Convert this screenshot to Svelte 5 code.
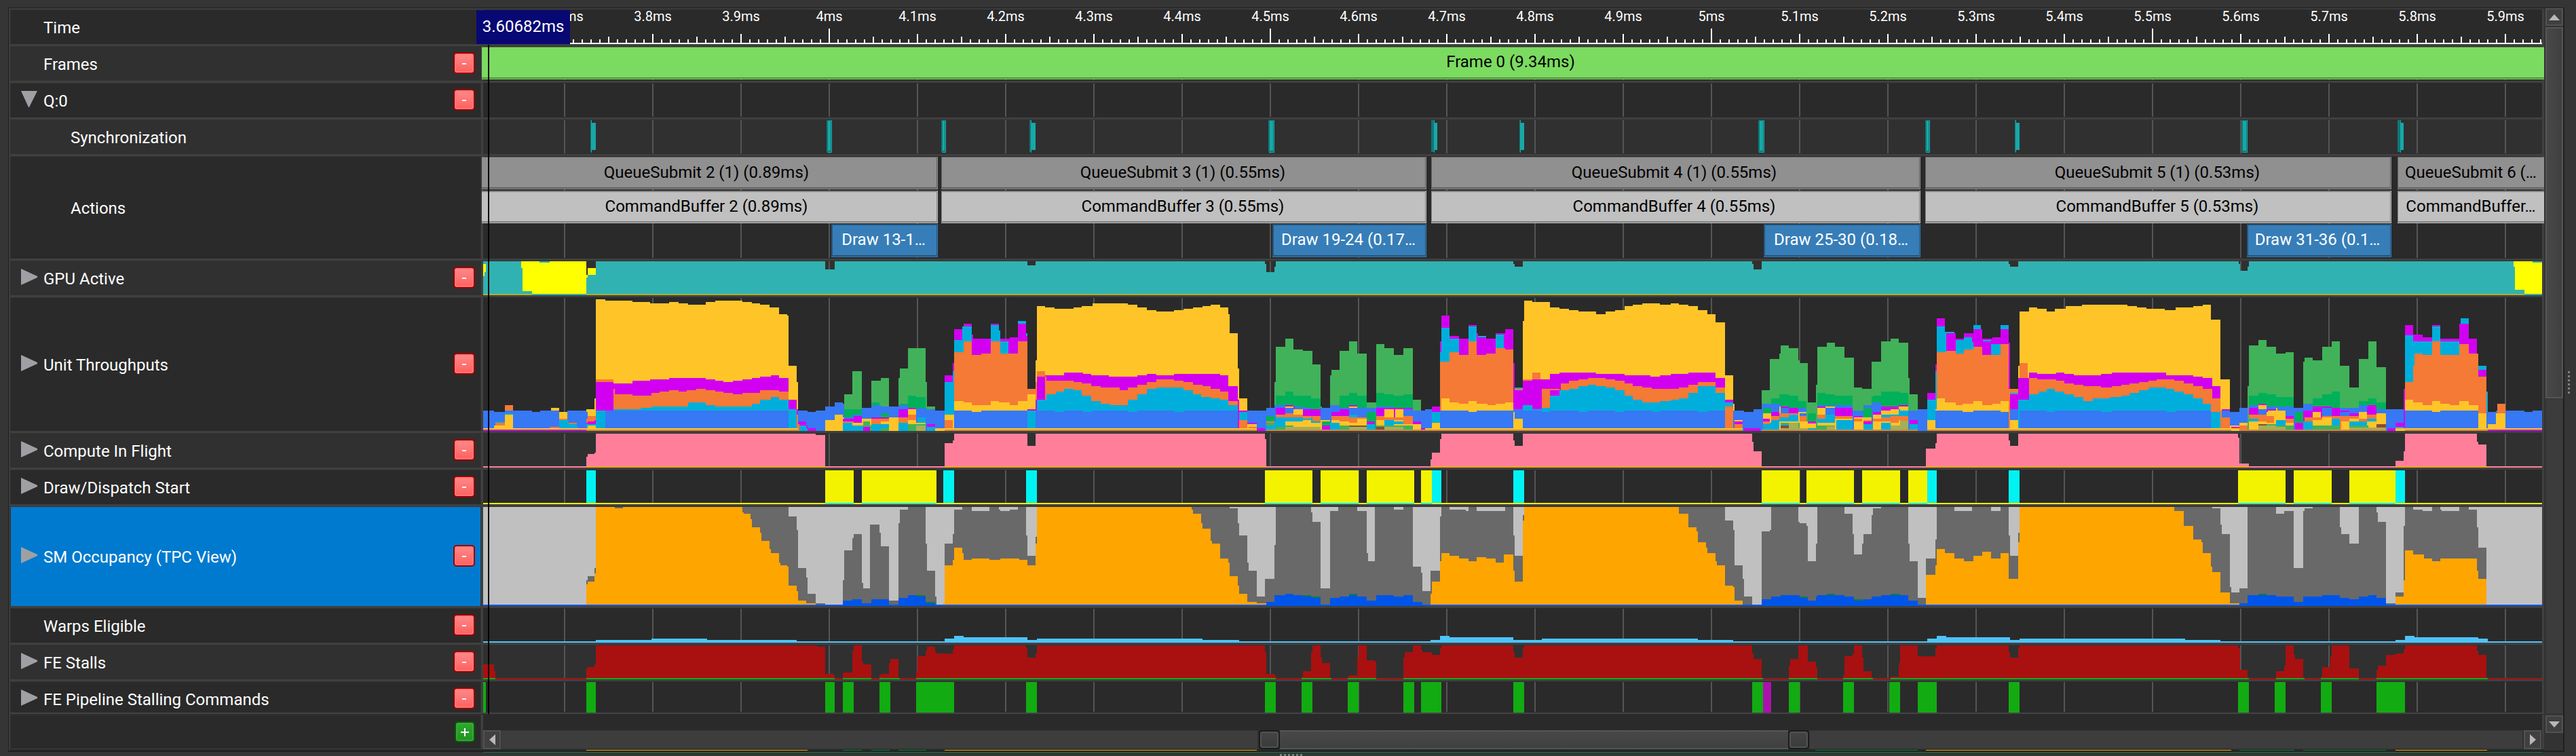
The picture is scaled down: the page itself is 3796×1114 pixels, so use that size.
<script>
  const X0 = 712;
  const WIDTH = 3034;

  // Counter samples are stored per window; each window has its own origin and scale.
  const windows = {
    A: { x: 700, s: 760 / 1568 },
    B: { x: 1400, s: 760 / 1568 },
    C: { x: 2100, s: 760 / 1568 },
    D: { x: 2800, s: 996 / 1568 }
  };
  const mapY = (v) => Math.round(360 + v * (754 / 1568));

  const colours = {
    Y: '#ffc528', O: '#f57a35', M: '#d200f0', C: '#00aedb', B: '#3778f4',
    G: '#41b25a', E: '#00b159', K: '#a3b055', R: '#8c4a3a', P: '#d8863a',
    teal: '#31b2b2', bright: '#ffff00', olive: '#adb22c',
    pink: '#ff7f9b', amber: '#ffa500', goldline: '#eca618',
    cyan: '#00f3f3', yellow: '#f3f300',
    dark: '#696969', light: '#c0c0c0', blue: '#0055e9', forest: '#088040',
    sky: '#4fc3fa', red: '#a81110', green: '#12ab12', purple: '#ab12ab'
  };

  // "window colour x y x y ... xEnd" becomes a stepped area down to the base line.
  function areas(text, base) {
    const yb = mapY(base);
    return text.trim().split('\n').map((line) => {
      const t = line.trim().split(/\s+/);
      const w = windows[t[0]];
      const n = t.slice(2).map(Number);
      const mx = (v) => Math.round(w.x + v * w.s);
      let d = `M${mx(n[0])} ${yb}`;
      for (let i = 0; i + 1 < n.length; i += 2) {
        d += `V${mapY(n[i + 1])}H${mx(n[i + 2] ?? n[i])}`;
      }
      return { d: d + `V${yb}Z`, fill: colours[t[1]] };
    });
  }

  // "window colour start-end start-end ..." becomes bars of one height.
  function bars(text, top, base) {
    return text.trim().split('\n').map((line) => {
      const t = line.trim().split(/\s+/);
      const w = windows[t[0]];
      const d = t.slice(2).map((r) => {
        const [a, b] = r.split('-').map((v) => Math.round(w.x + Number(v) * w.s));
        return `M${a} ${mapY(top)}H${b}V${mapY(base)}H${a}Z`;
      }).join('');
      return { d, fill: colours[t[1]] };
    });
  }

  const gpu = [
    ...areas(`
      A teal 25 52 338 156 342 73 367 52 1065 77 1093 52 1500
      B teal 0 52 235 64 260 52 957 60 961 85 986 69 990 52 1500
      C teal 0 52 268 60 272 69 297 52 994 60 998 77 1023 52 1500
      D teal 0 52 252 60 255 69 274 52 786 60 789 81 806 69 809 52 1489
      A bright 25 60 33
      A teal 25 98 29 85 33
      A bright 140 52 197 56 227 52 338 94 342 73 367
      A teal 140 73 144 143 173 152 338 102 342 94 367
      D bright 1423 52 1467 56 1489
      D teal 1423 69 1426 139 1448 152 1489`, 156),
    ...bars(`
      A olive 25-173 338-1500
      B olive 0-1568
      C olive 0-1568
      D olive 0-1448`, 152, 156)
  ];

  const unit = areas(`
    A O 91 493 116
    A Y 231 501 256
    A B 25 509 58 514 91 509 173 514 198 509 256 514 281 509 338
    A C 62 543 91 518 116
    A O 62 547 91
    A Y 58 555 91 522 116
    A Y 256 514 281
    A O 227 559 256 534 281 547 310 559 314
    A C 256 539 285 551 310 559 314
    A Y 338 505 363 472 367
    A B 338 514 342
    A O 338 534 342 526 367
    A M 338 547 342 543 363 539 367
    A C 338 551 367
    A Y 342 555 367
    A Y 367 168 396 173 479 177 532 181 590 177 619 181 648 185 701 177 730 173 813 177 842 181 867 185 896 193 924 214 950 218 953 372 978 422 982
    A O 367 414 421
    A M 367 422 421 426 479 418 532 414 590 410 701 414 730 418 755 422 784 418 813 414 842 410 867 406 900 401 924 410 953 476 978 505 982
    A O 421 443 425 460 479 464 536 455 561 451 590 447 619 451 644 447 673 443 701 447 730 451 755 455 784 460 813 455 867 447 924 451 953 505 978 522 982
    A C 367 509 396 509 421 505 503 501 536 497 648 485 701 493 730 497 842 489 867 476 900 468 924 476 953 505 978
    A B 396 509 953
    A B 982 509 1011 514 1036 509 1065 497 1093 485 1118 489 1122 501 1147 497 1176 501 1205 493 1234 497 1287 493 1316 501 1374 505 1399 509 1428
    A M 982 543 1007 555 1011 564 1036
    A C 982 555 1007 564 1011
    A O 982 551 986
    A Y 1065 539 1093 522 1118 530 1122
    A G 1122 460 1147 389 1176
    A G 1205 418 1234 410 1259
    A G 1287 410 1292 381 1316 318 1370 422 1374 497 1399
    A E 1122 505 1176
    A E 1205 485 1230 493 1234
    A E 1287 493 1292 489 1316 464 1341 468 1370 501 1374
    A B 1122 530 1147 522 1176
    A B 1205 493 1234 497 1287 493 1316 505 1345 501 1370 505 1399
    A E 1234 518 1259
    A M 1118 534 1151 526 1176
    A M 1205 530 1259
    A M 1287 505 1316 501 1341
    A O 1118 543 1151
    A G 1180 543 1201
    A Y 1176 534 1205
    A G 1180 543 1201 556 1205
    A M 1176 559 1201
    A O 1205 534 1259
    A Y 1234 543 1259 530 1287
    A C 1118 547 1151
    A Y 1147 547 1176
    A C 1118 555 1180
    A C 1205 551 1259
    A G 1234 564 1259
    A O 1287 530 1316
    A C 1287 547 1316
    A Y 1316 505 1341
    A O 1316 522 1341
    A C 1345 530 1370
    A Y 1316 539 1341 547 1370
    A G 1316 551 1370
    A K 1341 555 1370
    A M 1374 551 1399
    A C 1374 559 1399
    A M 1428 401 1453 364 1457
    A C 1428 422 1453 389 1457
    A Y 1428 522 1453 514 1457
    A O 1428 539 1453
    B M 0 401 8 364 12 260 41 243 66 276 70 289 124 243 149 268 153 289 182 285 206 243 231 280 235
    B C 0 422 8 389 12 293 37 252 66 340
    B C 124 247 149 264 153 297 177
    B C 206 235 231 272 235
    B M 206 243 231 280 235
    B O 12 331 41 297 66 339 95 335 124 297 153 335 206 297 235 443 260
    B Y 0 522 12 480 41 485 66 493 124 480 149 485 153 485 182 493 206 480 235 460 260
    B O 0 539 8
    B B 12 509 66 514 95 509 235
    B M 235 505 260
    B C 235 509 260
    B Y 260 356 264 189 289 193 318 198 375 193 400 189 433 181 541 185 570 193 598 202 627 206 681 202 710 198 739 193 767 189 792 185 821 193 846 214 850 272 875 381 879 472 904
    B O 260 422 264 389 289
    B M 260 476 264 406 289 401 347 393 404 397 429 401 483 406 570 401 598 397 627 401 681 397 821 401 846 435 875 476 879
    B O 289 406 293 418 375 422 400 426 429 435 458 439 516 447 541 439 570 431 598 422 627 414 681 418 710 422 739 431 767 435 792 443 821 451 846 480 875
    B C 264 476 293 460 322 451 347 443 375 447 400 464 429 480 458 489 487 493 541 476 570 460 598 443 627 439 710 447 739 460 763 468 792 472 821 476 846 493 875
    B B 260 509 318 514 347 509 404 514 433 509 541 514 570 509 681 514 710 509 875
    B M 879 509 904
    B C 879 514 904
    B O 879 539 904
    B B 904 509 961 501 986 493 990
    B M 904 547 933
    B Y 904 551 933
    B O 908 559 933
    B M 933 564 957
    B E 961 526 986
    B O 961 543 986
    B G 961 547 986
    B C 961 556 986
    B G 986 422 990 314 1019 289 1044 322 1073 326 1102 368 1126 497 1130
    B G 1155 402 1159 385 1184 326 1213 297 1238 335 1267 485 1296 306 1321 318 1350 339 1379 318 1407 476 1432 505
    B E 990 464 1019 451 1044 464 1098 472 1126
    B E 1184 464 1213 455 1238 464 1267
    B E 1296 455 1321 460 1350 464 1379 460 1407
    B B 986 493 1019 497 1073 501 1098 505 1126 501 1155 493 1184 501 1213 497 1238 501 1267 501 1296 497 1350 505 1407 509 1461
    B M 990 501 1019 493 1044 497 1048 505 1126
    B Y 1019 497 1044 505 1073
    B B 1019 502 1044
    B M 1073 505 1098 514 1126
    B M 1159 514 1184 505 1213 493 1238 518 1242
    B Y 1213 497 1238
    B B 1213 502 1238 505 1267
    B M 1296 501 1407
    B Y 1321 505 1350 505 1379 530 1407
    B B 1379 505 1407
    B M 1350 505 1353
    B O 990 522 1019 518 1044 522 1073 526 1098 526 1126
    B O 1159 526 1213 522 1238 530 1267
    B O 1296 526 1321 530 1379 526 1407
    B C 986 543 990 530 1073 534 1098 530 1102 543 1126
    B Y 1019 543 1073 539 1098 547 1126 539 1155
    B C 1019 530 1044
    B Y 1019 543 1073 539 1098
    B E 1130 543 1155
    B M 1130 556 1155
    B B 1180 551 1184
    B Y 1159 539 1184 543 1213 534 1267
    B C 1155 547 1184
    B C 1213 522 1238 551 1242
    B O 1213 530 1238
    B O 1184 526 1213
    B Y 1184 543 1213 547 1238 547 1267
    B E 1267 514 1296
    B M 1267 543 1292
    B C 1267 551 1292
    B Y 1296 539 1321 543 1350 539 1407
    B C 1321 539 1350 543 1407
    B O 1379 534 1407
    B Y 1296 547 1321 555 1350 551 1407
    B G 990 559 1019 555 1044 559 1126
    B G 1184 556 1267
    B G 1296 556 1407
    B K 1019 559 1126
    B R 1213 555 1267
    B R 1296 559 1321
    B K 1213 559 1267
    B K 1321 559 1379
    B M 1407 543 1432
    B Y 1407 551 1432
    B M 1432 564 1461
    B M 1465 497 1490
    B C 1465 514 1490
    B Y 1465 547 1490
    B M 1490 297 1494 218 1518 281 1547 289 1568
    B C 1490 330 1494 256 1518 289 1547
    B O 1490 360 1518 331 1547 339 1568
    B Y 1490 472 1518 485 1547 489 1568
    B B 1490 509 1568
    C B 0 505 21
    C M 21 497 45 297 50 218 74 281 103 289 132 247 157 272 161 285 186 289 215 272 243 260 268 364 272
    C C 21 514 45 330 50 256 74 289 103
    C C 132 252 157
    C C 161 281 186
    C M 161 285 186
    C C 215 276 240
    C Y 21 547 45
    C O 45 360 74 331 103 339 132 297 157 339 186 335 215 318 243 322 268
    C Y 50 472 74 485 103 489 132 480 157 489 190 493 215 489 243 485 268
    C B 45 509 132 514 157 509 268
    C C 272 439 297
    C O 272 443 297
    C M 268 480 272 447 297
    C B 268 505 297
    C Y 268 514 272 534 297
    C Y 297 235 301 173 326 177 380 193 409 198 438 202 466 206 520 214 549 206 578 202 607 189 631 185 660 181 714 185 747 181 772 185 801 189 829 202 858 214 883 239 912 401 937 489 941
    C O 297 414 326 393 351
    C M 297 418 326 414 380 397 409 393 520 397 607 401 685 406 714 401 747 397 801 393 883 410 912 476 937
    C O 355 443 409 426 438 418 466 414 495 410 549 414 578 418 607 426 631 435 660 439 689 443 772 439 801 431 829 422 883 439 912 497 937
    C M 380 447 383 447 409 426 412
    C C 297 493 326 501 355 501 380 464 409 447 438 443 466 435 495 431 520 435 549 439 578 447 607 464 631 476 660 485 714 480 747 476 772 472 801 455 829 435 883 455 912 485 937
    C M 326 418 355
    C C 326 505 355
    C B 297 509 355 514 380 509 466 514 495 509 578 514 607 509 690 514 714 509 829 514 858 509 912
    C O 912 497 937
    C B 912 509 970 514 999 505 1023 489 1081 497 1164
    C O 912 509 937
    C Y 941 539 966
    C M 941 543 966
    C O 941 551 966
    C M 970 564 1020
    C G 1023 447 1048 351 1077 335 1081 310 1106 318 1135 356 1139 364 1164 485 1188 430 1193 314 1222 302 1246 314 1275 347 1304 439 1329 443 1358 360 1386 297 1415 289 1440 302 1469 410 1473 460 1498
    C E 1052 472 1077 460 1106 464 1135 480 1160
    C E 1193 455 1217 460 1246 464 1300
    C E 1358 468 1361 464 1386 451 1469 489 1473
    C B 1023 489 1081 501 1106 501 1160
    C B 1193 493 1300 509 1333 493 1358 485 1386 497 1469 505 1527
    C E 1027 501 1052
    C M 1052 514 1077 497 1106 505 1135 514 1160
    C Y 1027 518 1052 526 1077 497 1081
    C B 1081 501 1106
    C M 1106 501 1135
    C O 1052 526 1077 518 1106 518 1135
    C M 1027 534 1048
    C C 1077 530 1106 522 1135
    C Y 1135 514 1160
    C B 1139 518 1160
    C O 1139 526 1160
    C C 1052 539 1077
    C O 1027 543 1048
    C C 1027 551 1048 547 1081
    C O 1081 518 1106
    C C 1081 530 1106 522 1135
    C Y 1077 543 1164
    C G 1081 547 1139
    C K 1106 547 1135
    C C 1081 551 1106
    C R 1081 556 1106
    C K 1081 564 1164
    C E 1164 518 1188
    C M 1164 543 1188
    C Y 1164 550 1188
    C C 1164 564 1188
    C M 1193 497 1246 501 1300
    C Y 1193 501 1217 497 1246
    C B 1217 501 1246
    C O 1193 522 1217 526 1300
    C C 1217 522 1246
    C C 1193 534 1217
    C Y 1217 547 1246 534 1300
    C C 1250 539 1300
    C Y 1193 547 1217
    C G 1193 555 1246
    C K 1222 558 1246
    C M 1304 526 1329
    C E 1333 501 1358
    C Y 1304 530 1329
    C O 1304 534 1329
    C Y 1304 543 1329 530 1358
    C O 1333 539 1358
    C M 1333 543 1358
    C C 1333 551 1386
    C M 1361 514 1386 497 1440 493 1469
    C Y 1361 522 1386 509 1415 505 1440 497 1469
    C O 1361 534 1386 522 1440
    C C 1386 522 1440 505 1469
    C O 1386 530 1415 526 1469
    C Y 1361 543 1415 547 1440 539 1469
    C C 1386 547 1415
    C K 1415 555 1469
    C M 1473 539 1498
    C C 1473 551 1498
    C M 1527 455 1551 368 1555
    C C 1527 476 1551 389 1568
    C Y 1527 539 1551 505 1555
    D G 0 302 19 460 41
    D E 0 455 19
    D M 0 493 19
    D Y 0 498 19
    D C 0 509 19
    D O 0 526 19
    D K 0 540 19
    D B 19 509 41 505 63
    D M 22 539 41
    D C 22 551 41
    D M 63 455 82 368 85
    D C 63 476 82 389 85
    D Y 63 539 82 505 85
    D M 85 227 104 268 107 272 129 289 148 272 170 260 190 289 214 285 233 260 252 302 255
    D C 85 252 104 268 107
    D C 107 268 126
    D M 107 272 126
    D C 129 293 148 285 167 300 170 247 188
    D M 170 260 188
    D C 192 293 211 306 233 247 252
    D M 192 297 211
    D M 233 260 252
    D O 85 331 107 326 129 335 148 322 170 314 190 339 233 306 252 443 274
    D Y 85 472 104 485 129 493 145 489 170 480 190 493 214 489 233 480 252
    D B 82 509 104 509 145 514 170 509 233 514 252
    D C 255 455 274
    D M 255 460 274
    D B 255 505 274
    D Y 255 539 274
    D Y 274 372 277 206 299 193 318 198 340 206 359 198 384 189 422 185 528 189 550 193 572 198 614 202 639 193 680 189 702 185 721 231 743 414 765
    D O 277 364 296
    D M 274 410 299 393 318 397 362 393 381 397 403 401 466 397 491 393 617 401 680 406 702 410 724 435 743
    D M 746 505 765
    D O 299 410 318 414 362 418 381 426 403 431 425 435 466 439 491 435 513 431 532 426 554 422 576 418 595 414 636 418 658 426 680 435 702 443 724 472 743 509 765
    D C 274 476 299 460 321 451 340 443 359 451 381 460 403 468 425 480 447 472 488 468 513 464 532 455 554 447 576 439 617 443 636 451 658 460 680 472 702 489 721 514 743
    D B 277 509 340 514 359 509 466 514 491 509 617 514 639 509 721
    D B 746 509 765 514 787 501 809
    D O 746 530 765
    D Y 765 555 787 547 806
    D M 768 559 787
    D O 787 555 806
    D G 806 435 809 310 831 293 850 314 872 335 894 331 913
    D G 935 360 938 347 957 356 979 314 1001 297 1020 372 1042 439 1064 351 1086 297 1105 376 1127
    D E 809 464 831 455 850 460 872 468 913
    D E 938 497 957 472 979 460 1001 451 1020
    D E 1042 501 1064 480 1086 472 1105 484 1127
    D B 809 493 831 489 850 497 913 501 935 489 957 497 979 501 1042 501 1064 493 1086 505 1168
    D M 809 501 831 489 850 505 872
    D Y 831 493 850 514 853
    D B 831 505 850
    D O 809 522 850 526 872
    D C 809 534 831 530 850
    D Y 853 509 872 501 875 509 894 540 913
    D M 894 526 913
    D O 894 534 913
    D C 872 539 894
    D O 853 526 867
    D O 831 530 850
    D Y 809 543 850 547 872
    D Y 894 547 913
    D E 916 514 935
    D M 916 547 935
    D G 831 551 872 556 913
    D R 831 551 850 562 853
    D K 831 556 872 560 894
    D M 935 509 957 497 1001 501 1020
    D B 979 501 1001
    D O 938 530 979 526 1020
    D Y 957 514 976
    D O 957 530 979
    D C 935 543 957 555 979
    D Y 957 539 979 530 1001
    D C 1001 534 1020
    D Y 979 543 1001
    D C 979 555 1001
    D G 957 556 1020
    D M 1020 509 1042 526 1064 497 1086 493 1105
    D B 1020 514 1042 505 1064
    D M 1042 518 1064
    D B 1064 497 1083
    D O 1020 526 1064
    D Y 1023 543 1042 534 1064 514 1083
    D C 1042 543 1064
    D O 1064 534 1083 522 1105
    D C 1064 543 1083 535 1105
    D M 1086 505 1105
    D O 1086 522 1105
    D C 1086 535 1105
    D Y 1023 555 1042 556 1083 543 1105 518 1127
    D R 1105 551 1127
    D G 1042 556 1086
    D K 1042 562 1127
    D M 1130 564 1149 547 1168
    D C 1149 559 1168
    D M 1168 443 1171 247 1190 276 1212 285 1234 247 1253 289 1297 243 1319 289 1338
    D C 1171 278 1190 297 1234 252 1253 297 1297
    D C 1300 227 1319
    D M 1300 243 1319 289 1338
    D O 1171 422 1190 372 1193 335 1212 335 1234 297 1253 339 1297 306 1319 335 1341
    D C 1212 297 1234
    D O 1212 339 1234
    D C 1341 372 1360 451 1363
    D M 1341 385 1360
    D O 1341 406 1360
    D Y 1171 476 1190 485 1212 493 1234 480 1253 489 1275 493 1297 480 1319 493 1341
    D B 1171 509 1234 514 1253 509 1341
    D Y 1341 518 1360
    D B 1360 514 1382 509 1448 514 1467 509 1489
    D O 1385 489 1404
    D Y 1363 551 1382 518 1404
    A Y 25 564 982
    A Y 1399 564 1500
    A M 25 568 338
    A P 338 568 982
    A P 1428 568 1500
    B Y 0 564 933
    B P 0 568 933
    B Y 1490 564 1568
    B P 961 568 1568
    C Y 0 564 966
    C P 0 568 966
    C P 1023 568 1498
    C Y 1527 564 1568
    C P 1527 568 1568
    D Y 63 564 787
    D P 63 568 768
    D P 787 568 1127
    D Y 1149 564 1489
    D P 1171 568 1363
    D M 1363 568 1489`, 571);

  const compute = [
    ...areas(`
      A pink 25 680 338 651 342 643 363 638 367 580 1036 584 1065 680 1428 609 1453 601 1457 580 1500
      B pink 0 609 8 601 12 580 235 618 260 580 957 597 961 680 1461 659 1465 638 1490 597 1494 580 1568
      C pink 0 680 17 659 21 638 45 597 50 580 268 601 272 618 297 580 994 605 999 634 1023 680 1523 626 1551 609 1556 580 1568
      D pink 0 680 60 626 82 609 85 580 252 601 255 618 274 580 784 593 787 672 809 680 1149 663 1168 634 1171 580 1338 605 1341 613 1360 680 1489`, 684),
    ...bars(`
      A goldline 338-1069 1428-1500
      B goldline 0-961 1461-1568
      C goldline 17-1027 1523-1568
      D goldline 60-809 1149-1363`, 680, 684)
  ];

  const draws = `
    A yellow 1065-1151 1176-1403
    B yellow 957-1102 1126-1242 1267-1411 1432-1465
    C yellow 0-21 1023-1139 1159-1304 1329-1444 1469-1527
    D yellow 19-63 784-894 913-1001 1042-1149`;
  const dispatch = [
    ...bars(draws, 692, 796),
    ...bars(`
      A cyan 338-367 1424-1457
      B cyan 0-12 231-264 1465-1494
      C cyan 21-50 268-301 1527-1556
      D cyan 63-85 252-277 1149-1171`, 692, 796),
    ...bars(`
      A yellow 25-1500
      B yellow 0-1568
      C yellow 0-1568
      D yellow 0-1489`, 792, 796),
    ...bars(draws.replaceAll('yellow', 'cyan'), 792, 796)
  ];

  const occupancy = areas(`
    A light 25 805 1500
    B light 0 805 1568
    C light 0 805 1568
    D light 0 805 1489
    A dark 338 1030 342 1017 363 992 367 805 953 834 978 876 982 992 1007 1021 1011 1071 1036 1100 1065
    A dark 1118 1030 1122 938 1147 901 1151 888 1176 1038 1180 1054 1201 859 1230 884 1234 925 1259 1092 1287 855 1292 813 1316 805 1370 917 1374 1000 1399 1079 1403
    A dark 1428 917 1453 888 1457 813 1486 805 1510
    A amber 338 1042 342 1034 363 1009 367 805 425 809 450 805 813 822 817 826 838 842 842 867 867 884 871 909 896 934 900 946 924 975 928 984 949 988 953 1046 978 1062 982 1092 1007 1100 1036
    A amber 1424 1100 1428 984 1453 967 1457 930 1482
    A forest 1118 1092 1147 1088 1176
    A blue 1118 1092 1147 1088 1176 1100 1205 1088 1259 1104 1287 1083 1316 1075 1370
    A forest 1341 1075 1370 1096 1399
    A blue 1341 1079 1370 1100 1399
    B dark 0 917 8 888 12 813 37 805 66 817 120 805 149 813 153 817 182 813 206 805 231 892 235 955 260 896 264 805 850 809 875 855 879 892 904 975 908 1000 933 1079 957 1025 986 921 990 805 1098 822 1102 851 1126 1054 1155 817 1180 805 1238 817 1267 946 1271 971 1292 805 1350 813 1379 805 1407 988 1432 1007 1436 1063 1461 1000 1490 834 1494 805 1518 813 1568
    B amber 0 984 8 967 12 930 37 946 41 967 66 963 120 967 153 963 210 967 235 984 260 917 264 805 734 813 739 826 763 855 767 871 792 909 796 917 821 963 846 975 850 1017 875 1046 879 1071 904 1096 933 1100 961
    B amber 1461 1034 1490 967 1494 946 1518 955 1568
    B forest 1073 1075 1098 1079 1126
    B forest 1213 1071 1238
    B blue 961 1096 986 1075 1019 1071 1044 1075 1073 1079 1102 1083 1126 1104 1155 1083 1184 1079 1213 1075 1238 1079 1267 1092 1296 1075 1350 1079 1379 1075 1407 1096 1436
    C dark 17 1000 45 863 50 805 74 813 103 817 132 805 157 817 243 805 268 892 272 955 297 830 301 805 912 847 937 876 941 984 966 1025 970 1079 995 1104 1023 880 1048 876 1052 805 1135 851 1139 855 1160 863 1164 971 1188 917 1193 805 1275 826 1300 888 1304 950 1329 917 1333 888 1358 830 1362 809 1386 805 1469 917 1473 971 1498 1083 1523 963 1551 905 1556 805 1568
    C amber 17 1071 21 1034 45 971 50 946 74 955 103 963 132 971 157 959 186 963 215 975 240 950 268 1000 272 1034 297 847 301 805 772 826 801 867 825 880 829 913 854 930 858 946 883 971 887 984 912 1046 937 1050 941 1092 966
    C amber 1523 1013 1551 984 1556 934 1568
    C forest 1139 1079 1164
    C forest 1222 1071 1246
    C forest 1304 1088 1333
    C forest 1415 1071 1444
    C blue 1023 1088 1052 1079 1081 1075 1139 1083 1164 1092 1188 1079 1193 1075 1275 1079 1304 1092 1333 1088 1358 1079 1386 1075 1469 1092 1498
    D dark 0 805 19 917 22 971 41 1083 60 963 82 905 85 805 126 817 167 805 211 817 233 805 252 892 255 955 274 884 277 805 724 809 743 859 746 888 765 1050 768 1067 787 1054 806 805 872 826 891 817 913 992 935 817 938 809 957 805 1020 867 1023 888 1042 917 1064 805 1105 822 1108 851 1127 1100 1149 1067 1168 863 1171 805 1190 813 1212 817 1234 805 1253 813 1256 817 1297 805 1319 813 1338 867 1341 930 1360
    D amber 60 1013 82 984 85 934 104 946 126 963 148 971 170 955 190 942 211 963 233 946 252 1025 274 913 277 805 636 817 658 863 680 905 699 913 702 946 721 988 724 1004 743 1067 765 1100 787
    D amber 1149 1079 1168 1030 1171 938 1190 950 1215 963 1234 971 1253 963 1338 1000 1341 1025 1360
    D forest 831 1071 850
    D blue 0 1075 19 1092 41
    D blue 787 1100 806 1075 872 1079 913 1096 935 1079 979 1075 1020 1083 1042 1088 1064 1079 1086 1075 1105 1083 1127
    A blue 25 1104 1500
    B blue 0 1104 1568
    C blue 0 1104 1568
    D blue 0 1104 1489`, 1108);

  const warps = areas(`
    A sky 25 1217 367 1212 536 1208 706 1212 978 1217 1428 1208 1457 1200 1482
    B sky 0 1208 12 1200 41 1204 235 1212 264 1208 767 1212 879 1217 1461 1212 1490 1200 1518 1204 1568
    C sky 0 1217 17 1212 45 1200 74 1204 268 1212 355 1208 829 1212 937 1217 1527 1208 1556 1200 1568
    D sky 0 1217 63 1208 85 1200 107 1204 255 1212 277 1208 661 1212 743 1217 1149 1212 1171 1200 1193 1204 1341 1208 1363 1217 1489`, 1221);

  const stalls = [
    ...areas(`
      A red 25 1287 58 1308 62 1329 338 1300 342 1295 363 1287 367 1229 1040 1233 1065 1316 1089 1321 1093 1329 1118 1312 1147 1246 1151 1229 1176 1279 1180 1287 1205 1329 1230 1321 1234 1316 1259 1283 1263 1271 1287 1329 1341 1308 1345 1262 1370 1246 1374 1233 1399 1250 1403 1254 1453 1241 1457 1229 1500
      B red 0 1254 8 1246 12 1229 231 1237 235 1266 260 1254 264 1229 957 1250 961 1316 986 1321 990 1329 1069 1325 1073 1308 1098 1250 1102 1229 1126 1266 1130 1283 1155 1329 1209 1325 1213 1321 1238 1266 1242 1229 1267 1275 1292 1279 1296 1329 1378 1266 1382 1250 1407 1229 1432 1241 1436 1250 1461 1254 1465 1258 1490 1241 1494 1229 1568
      C red 0 1250 21 1258 45 1237 50 1229 268 1250 272 1266 297 1237 301 1229 994 1254 999 1271 1023 1329 1106 1291 1110 1271 1135 1229 1164 1279 1188 1296 1193 1329 1271 1321 1275 1262 1300 1254 1304 1229 1329 1266 1333 1308 1358 1329 1415 1325 1440 1283 1444 1229 1498 1262 1551 1241 1556 1229 1568
      D red 0 1229 41 1262 82 1237 85 1229 252 1250 255 1266 274 1237 277 1229 784 1237 789 1304 806 1329 872 1308 891 1291 894 1229 913 1258 916 1271 935 1329 976 1325 979 1296 998 1262 1001 1229 1042 1300 1064 1329 1105 1304 1108 1291 1127 1258 1149 1254 1168 1241 1171 1229 1338 1246 1341 1258 1360 1329 1489`, 1333),
    ...bars(`
      A green 25-62 338-1093 1118-1205 1230-1292 1341-1500
      B green 0-990 1069-1159 1209-1296 1379-1568
      C green 0-1027 1106-1193 1271-1362 1415-1568
      D green 0-809 872-938 976-1064 1105-1363`, 1329, 1333)
  ];

  const pipeline = bars(`
    A green 25-33 338-367 1065-1093 1118-1151 1230-1263 1341-1457
    B green 0-12 231-264 957-990 1069-1102 1209-1242 1378-1411 1432-1494
    C green 0-50 268-301 994-1027 1106-1139 1271-1304 1411-1444 1498-1556
    C purple 1027-1052
    D green 41-85 252-277 784-809 869-894 976-1001 1105-1171`, 1341, 1441);

  // Slice of the next lane that shows under the scroll bar.
  const under = bars(`
    A amber 338-1011 1428-1457
    B amber 0-933
    C amber 1523-1568
    D amber 60-768 1149-1362
    A forest 1118-1176 1205-1260 1287-1373
    C forest 1187-1497
    D forest 0-40 787-915 935-1127`, 1550, 1552);

  const sync = [
    [870, 872, 878], [1218, 1226, 0], [1387, 1394, 0], [1517, 1520, 1526], [1869, 1878, 0],
    [2109, 2114, 2118], [2239, 2241, 2246], [2591, 2600, 0], [2837, 2844, 0],
    [2969, 2971, 2976], [3303, 3312, 0], [3533, 3538, 3542]
  ];

  const blocks = {
    frames: [{ x: 710, r: 3749, y: 69, k: 'frame', t: 'Frame 0 (9.34ms)', c: 2226 }],
    actions: [
      [710, 1382, 'QueueSubmit 2 (1) (0.89ms)', 'CommandBuffer 2 (0.89ms)', 1041],
      [1387, 2102, 'QueueSubmit 3 (1) (0.55ms)', 'CommandBuffer 3 (0.55ms)', 1743],
      [2109, 2830, 'QueueSubmit 4 (1) (0.55ms)', 'CommandBuffer 4 (0.55ms)', 2467],
      [2837, 3524, 'QueueSubmit 5 (1) (0.53ms)', 'CommandBuffer 5 (0.53ms)', 3179],
      [3533, 3749, 'QueueSubmit 6 (…', 'CommandBuffer…', 3641]
    ].flatMap(([x, r, a, b, c]) => [
      { x, r, y: 231, k: 'queue', t: a, c },
      { x, r, y: 281, k: 'buffer', t: b, c }
    ]).concat([
      { x: 1225, r: 1382, y: 330, k: 'draw', t: 'Draw 13-1…', c: 1302 },
      { x: 1875, r: 2102, y: 330, k: 'draw', t: 'Draw 19-24 (0.17…', c: 1987 },
      { x: 2599, r: 2830, y: 330, k: 'draw', t: 'Draw 25-30 (0.18…', c: 2713 },
      { x: 3311, r: 3524, y: 330, k: 'draw', t: 'Draw 31-36 (0.1…', c: 3415 }
    ])
  };

  const rows = [
    { label: 'Time', y: 14, h: 51, time: true },
    { label: 'Frames', y: 68, h: 51, minus: true, blocks: blocks.frames },
    { label: 'Q:0', y: 122, h: 51, minus: true, arrow: 'down' },
    { label: 'Synchronization', y: 176, h: 51, indent: true, sync: true },
    { label: 'Actions', y: 230, h: 151, indent: true, blocks: blocks.actions },
    { label: 'GPU Active', y: 384, h: 51, minus: true, arrow: 'right', shapes: gpu },
    { label: 'Unit Throughputs', y: 438, h: 197, minus: true, arrow: 'right', shapes: unit },
    { label: 'Compute In Flight', y: 638, h: 51, minus: true, arrow: 'right', shapes: compute },
    { label: 'Draw/Dispatch Start', y: 692, h: 51, minus: true, arrow: 'right', shapes: dispatch },
    { label: 'SM Occupancy (TPC View)', y: 746, h: 147, minus: true, arrow: 'right', shapes: occupancy, selected: true },
    { label: 'Warps Eligible', y: 896, h: 51, minus: true, shapes: warps },
    { label: 'FE Stalls', y: 950, h: 51, minus: true, arrow: 'right', shapes: stalls },
    { label: 'FE Pipeline Stalling Commands', y: 1004, h: 46, minus: true, arrow: 'right', shapes: pipeline, last: true }
  ];

  const marks = Array.from({ length: 23 }, (_, i) => ({
    x: Math.round(832 + i * 129.98),
    t: `${+(3.7 + i / 10).toFixed(1)}ms`
  }));

  const ticks = Array.from({ length: 233 }, (_, i) => {
    const k = i - 8;
    const x = Math.round(832 + k * 12.998);
    const h = (k + 20) % 50 === 0 ? 21 : k % 10 === 0 ? 13 : k % 5 === 0 ? 9 : 5;
    return { x, h };
  }).filter((t) => t.x > 712 && t.x < 3746);
</script>

<div class="window">
  <div class="panel">
    <div class="lanes">
      {#each rows as row, i}
        <div class="row" class:odd={i % 2 === 1} class:selected={row.selected} class:last={row.last} style:height="{row.h + (row.last ? 2 : 3)}px">
          <div class="label" class:indent={row.indent}>
            <span class="arrow">
              {#if row.arrow === 'right'}
                <svg width="24" height="24" viewBox="0 0 24 24"><path d="M0 0L24 11V13L0 24Z" /></svg>
              {:else if row.arrow === 'down'}
                <svg width="24" height="24" viewBox="0 0 24 24"><path d="M0 0H24L12 24H11Z" /></svg>
              {/if}
            </span>
            <span class="name">{row.label}</span>
            {#if row.minus}<button class="toggle" aria-label="Remove"><i></i></button>{/if}
          </div>
          <div class="divider"></div>
          <svg class="track" width={WIDTH} height={row.h} viewBox="{X0} {row.y} {WIDTH} {row.h}">
            {#if row.time}
              {#each marks as m}<text class="scale" x={m.x} y="31">{m.t}</text>{/each}
              {#each ticks as t}<rect class="tick" x={t.x - 1} y={63 - t.h} width="2" height={t.h} />{/each}
              <rect class="tick" x="712" y="63" width={WIDTH} height="2" />
            {:else}
              {#each marks as m}<rect class="grid" x={m.x - 1} y={row.y + 1} width="2" height={row.h - 2} />{/each}
            {/if}
            {#if row.sync}
              {#each sync as [a, b, c]}
                {#if c}
                  <rect class="sync-edge" x={a} y="177" width={b - a} height="47" />
                  <rect class="sync-fill" x={b - 1} y="181" width={c - b + 1} height="40" />
                  <rect class="sync-fill" x={b - 1} y="177" width="1" height="48" />
                {:else}
                  <rect class="sync-edge" x={a} y="177" width={b - a} height="47" />
                  <rect class="sync-fill" x={a + 2} y="178" width={b - a - 4} height="44" />
                  <rect class="sync-fill" x={a + 1} y="224" width={b - a - 1} height="1" />
                  <rect class="sync-fill" x={b - 1} y="177" width="1" height="48" />
                {/if}
              {/each}
            {/if}
            {#if row.blocks}
              {#each row.blocks as b}
                <g class={b.k}>
                  <rect class="base" x={b.x} y={b.y} width={b.r - b.x} height={b.k === 'draw' ? 49 : 48} />
                  <rect class="edge" x={b.x} y={b.y} width={b.r === 3749 ? b.r - b.x : b.r - b.x - 1} height={b.k === 'draw' ? 48 : 47} />
                  <rect
                    class="base"
                    x={b.x === 710 ? 710 : b.x + (b.k === 'draw' ? 2 : 1)}
                    y={b.y + (b.k === 'frame' || b.k === 'queue' ? 1 : 2)}
                    width={(b.r === 3749 ? b.r : b.r - 2) - (b.x === 710 ? 710 : b.x + (b.k === 'draw' ? 2 : 1))}
                    height={b.k === 'buffer' ? 43 : 44}
                  />
                  <text x={b.c} y={b.y + (b.k === 'frame' ? 30 : 31)}>{b.t}</text>
                </g>
              {/each}
            {/if}
            {#if row.shapes}
              {#each row.shapes as s}<path d={s.d} fill={s.fill} />{/each}
            {/if}
          </svg>
          <div class="divider"></div>
        </div>
      {/each}

      <div class="footer">
        <div class="label add"><button class="plus" aria-label="Add"><svg width="14" height="14" viewBox="0 0 14 14"><path d="M6 1H8V6H13V8H8V13H6V8H1V6H6Z" /></svg></button></div>
        <div class="divider"></div>
        <div class="hscroll">
          <div class="step"><svg width="9" height="16" viewBox="0 0 9 16"><path d="M9 0V16L0 8Z" /></svg></div>
          <div class="rail left"></div>
          <div class="knob"></div>
          <div class="range"></div>
          <div class="knob"></div>
          <div class="rail right"></div>
          <div class="step"><svg width="9" height="16" viewBox="0 0 9 16"><path d="M0 0V16L9 8Z" /></svg></div>
        </div>
        <div class="divider"></div>
      </div>
      <svg class="under" width={WIDTH} height="2" viewBox="{X0} 1104 {WIDTH} 2">
        {#each under as s}<path d={s.d} fill={s.fill} />{/each}
      </svg>

      <div class="cursor"></div>
      <div class="stamp">3.60682ms</div>
    </div>

    <div class="vscroll">
      <div class="vstep"><svg width="16" height="9" viewBox="0 0 16 9"><path d="M8 0L16 9H0Z" /></svg></div>
      <div class="thumb"></div>
      <div class="vrail"></div>
      <div class="vstep"><svg width="16" height="9" viewBox="0 0 16 9"><path d="M0 0H16L8 9Z" /></svg></div>
    </div>
  </div>

  <div class="grip vertical">{#each Array(6) as _}<i></i>{/each}</div>
  <div class="edge-line"></div>
  <div class="grip horizontal">{#each Array(6) as _}<i></i>{/each}</div>
</div>

<style>
  :global(body) {
    background: #353535;
    overflow: hidden;
  }
  .window {
    position: relative;
    box-sizing: border-box;
    width: 3796px;
    height: 1114px;
    padding: 11px 0 0 12px;
    overflow: hidden;
    background: #353535;
    color: #fff;
    font-family: Roboto, 'Liberation Sans', sans-serif;
    font-size: 24px;
  }
  .panel {
    display: flex;
    box-sizing: border-box;
    width: 3767px;
    height: 1097px;
    border: 1px solid #202020;
    border-width: 1px 2px 2px 1px;
    background: #2a2a2a;
  }
  .lanes {
    position: relative;
    box-sizing: border-box;
    flex: none;
    width: 3736px;
    border-top: 2px solid #3d3d3d;
    border-left: 2px solid #3d3d3d;
  }
  .row {
    display: grid;
    grid-template-columns: 694px 3px 3034px 3px;
    box-sizing: border-box;
    border-bottom: 3px solid #404040;
    background: #2a2a2a;
  }
  .row.odd {
    background: #303030;
  }
  .row.last {
    border-bottom: 2px solid #444;
  }
  .row.last .track {
    overflow: hidden;
  }
  .row.selected .label {
    background: #007acf;
  }
  .label {
    display: flex;
    align-items: center;
    box-sizing: border-box;
    min-height: 0;
    padding: 2px 9px 0 15px;
    border: 1px solid #333;
    border-width: 1px 1px 0;
  }
  .row.last .label {
    padding-top: 7px;
  }
  .arrow {
    display: flex;
    width: 33px;
    height: 30px;
  }
  .arrow svg {
    fill: #a0a0a4;
  }
  .name {
    flex: 1;
    white-space: nowrap;
  }
  .indent .name {
    margin-left: 40px;
  }
  .divider {
    background: #404040;
  }
  .toggle {
    display: flex;
    align-items: center;
    justify-content: center;
    box-sizing: border-box;
    width: 32px;
    height: 32px;
    margin: 0 -1px 4px 0;
    padding: 2px 0 0;
    border: 2px solid #970000;
    border-radius: 5px;
    background: linear-gradient(#ff8a8a, #ff5f5f);
    box-shadow: inset 0 0 0 2px rgba(255, 120, 120, 0.9);
  }
  .toggle i {
    width: 6px;
    height: 2px;
    background: #fff;
  }
  .plus {
    display: flex;
    align-items: center;
    justify-content: center;
    box-sizing: border-box;
    width: 30px;
    height: 31px;
    padding: 0;
    border: 2px solid #0b540b;
    border-radius: 5px;
    background: linear-gradient(#2fa82f, #229222);
    box-shadow: inset 0 0 0 2px rgba(60, 175, 60, 0.7);
  }
  .plus svg {
    fill: #fff;
  }
  .track {
    position: relative;
    display: block;
    overflow: visible;
    shape-rendering: crispEdges;
  }
  text {
    text-anchor: middle;
  }
  .scale {
    fill: #fff;
    font-size: 20px;
  }
  .tick {
    fill: #fff;
  }
  .grid {
    fill: #555;
  }
  .sync-fill {
    fill: #18a8a8;
  }
  .sync-edge {
    fill: #107676;
  }
  .frame .base {
    fill: #7bdb60;
  }
  .frame .edge {
    fill: #539441;
  }
  .queue .base {
    fill: #909090;
  }
  .queue .edge {
    fill: #626262;
  }
  .buffer .base {
    fill: #c0c0c0;
  }
  .buffer .edge {
    fill: #828282;
  }
  .draw .base {
    fill: #377eb8;
  }
  .draw .edge {
    fill: #25557c;
  }
  .draw text {
    fill: #fff;
  }
  .footer {
    display: grid;
    grid-template-columns: 694px 3px 3034px 3px;
    height: 51px;
    margin-top: 1px;
  }
  .label.add {
    justify-content: flex-end;
    padding: 0 8px 0 0;
    border-bottom: 1px solid #404040;
  }
  .hscroll {
    display: flex;
    height: 28px;
    margin-top: 23px;
    padding-right: 1px;
  }
  .step,
  .vstep {
    display: flex;
    align-items: center;
    justify-content: center;
    box-sizing: border-box;
    flex: none;
    border: 2px solid #525252;
    background: #404040;
  }
  .step svg,
  .vstep svg {
    fill: #b8b8b8;
  }
  .step {
    width: 26px;
  }
  .rail {
    box-sizing: border-box;
    flex: none;
    border: 1px solid #353535;
    border-right: 2px solid #303030;
    background: #3d3d3d;
  }
  .rail.left {
    width: 1117px;
  }
  .rail.right {
    flex: 1;
  }
  .knob {
    box-sizing: border-box;
    flex: none;
    width: 31px;
    border: 2px solid #1c1c1c;
    border-radius: 5px;
    background: linear-gradient(#454545, #3a3a3a);
    box-shadow: inset 0 0 0 2px #535353;
  }
  .range {
    box-sizing: border-box;
    flex: none;
    width: 749px;
    border: solid #555;
    border-width: 2px 0;
    background: linear-gradient(#484848, #404040);
  }
  .under {
    display: block;
    width: 3034px;
    margin-left: 697px;
    shape-rendering: crispEdges;
  }
  .cursor {
    position: absolute;
    top: 52px;
    left: 704px;
    width: 2px;
    height: 986px;
    background: #000;
  }
  .stamp {
    position: absolute;
    top: 1px;
    left: 687px;
    width: 138px;
    height: 50px;
    background: #080874;
    line-height: 48px;
    text-align: center;
  }
  .vscroll {
    display: flex;
    flex-direction: column;
    box-sizing: border-box;
    flex: none;
    width: 28px;
    padding: 0 0 26px 2px;
    background: #333;
  }
  .vstep {
    height: 26px;
  }
  .thumb {
    box-sizing: border-box;
    height: 547px;
    margin-top: 2px;
    border: 2px solid #555;
    background: linear-gradient(90deg, #484848, #404040);
  }
  .vrail {
    box-sizing: border-box;
    flex: 1;
    margin-bottom: 2px;
    border: 1px solid #353535;
    background: #3c3c3c;
  }
  .grip {
    position: absolute;
    display: flex;
    gap: 3px;
  }
  .grip.vertical {
    top: 547px;
    left: 3784px;
    flex-direction: column;
  }
  .grip.horizontal {
    top: 1111px;
    left: 1886px;
  }
  .grip i {
    width: 3px;
    height: 3px;
    background: #808080;
  }
  .edge-line {
    position: absolute;
    top: 1108px;
    left: 712px;
    width: 3034px;
    height: 1px;
    background: #088040;
  }
</style>
